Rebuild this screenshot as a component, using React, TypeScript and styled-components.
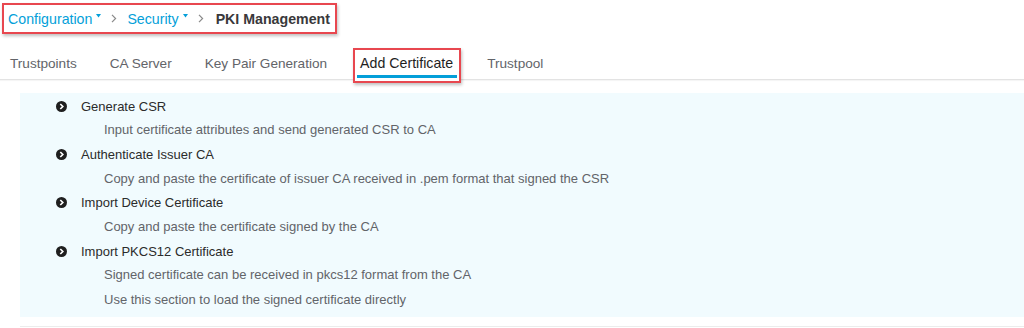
import React from "react";
import styled, { createGlobalStyle } from "styled-components";

const GlobalStyle = createGlobalStyle`
  html, body {
    margin: 0;
    padding: 0;
    background: #ffffff;
    font-family: "Liberation Sans", Arial, sans-serif;
  }
`;

const tabs = ["Trustpoints", "CA Server", "Key Pair Generation", "Add Certificate", "Trustpool"];

const items = [
  { title: "Generate CSR", lines: ["Input certificate attributes and send generated CSR to CA"] },
  {
    title: "Authenticate Issuer CA",
    lines: ["Copy and paste the certificate of issuer CA received in .pem format that signed the CSR"],
  },
  { title: "Import Device Certificate", lines: ["Copy and paste the certificate signed by the CA"] },
  {
    title: "Import PKCS12 Certificate",
    lines: [
      "Signed certificate can be received in pkcs12 format from the CA",
      "Use this section to load the signed certificate directly",
    ],
  },
];

const Caret = () => (
  <svg width="5" height="4" viewBox="0 0 5 4">
    <path d="M0 0h5L2.5 3.5z" fill="#049fd9" />
  </svg>
);

const Chevron = () => (
  <svg width="6" height="9" viewBox="0 0 6 9">
    <path d="M1 0.8l3.6 3.7L1 8.2" fill="none" stroke="#8a8a8a" strokeWidth="1.2" />
  </svg>
);

const Bullet = () => (
  <svg width="11" height="11" viewBox="0 0 11 11">
    <circle cx="5.5" cy="5.5" r="5.5" fill="#1f1f1f" />
    <path d="M4.3 3l2.5 2.5-2.5 2.5" fill="none" stroke="#ffffff" strokeWidth="1.7" />
  </svg>
);

const App = () => {
  return (
    <S.Page>
      <GlobalStyle />
      <S.Breadcrumb>
        <S.Crumb>
          Configuration <Caret />
        </S.Crumb>
        <Chevron />
        <S.Crumb>
          Security <Caret />
        </S.Crumb>
        <Chevron />
        <S.Current>PKI Management</S.Current>
      </S.Breadcrumb>

      <S.TabBar>
        {tabs.map((t) => (
          <S.Tab key={t} $active={t === "Add Certificate"}>
            {t}
          </S.Tab>
        ))}
      </S.TabBar>

      <S.Panel>
        {items.map((it) => (
          <S.Item key={it.title}>
            <S.ItemTitle>
              <Bullet />
              <span>{it.title}</span>
            </S.ItemTitle>
            {it.lines.map((l) => (
              <S.Desc key={l}>{l}</S.Desc>
            ))}
          </S.Item>
        ))}
      </S.Panel>
      <S.BottomRule />
    </S.Page>
  );
};

export default App;

interface tabProps {
  $active: boolean;
}

const S = {
  Page: styled.div`
    width: 1024px;
    height: 328px;
    overflow: hidden;
    padding-top: 3px;
    box-sizing: border-box;
  `,
  Breadcrumb: styled.div`
    display: inline-flex;
    align-items: center;
    gap: 10px;
    margin-left: 2px;
    height: 31px;
    padding: 0 5px 0 4px;
    box-sizing: border-box;
    border: 2px solid #e8474f;
    box-shadow: 1px 2px 3px rgba(0, 0, 0, 0.25);
    font-size: 14.2px;
  `,
  Crumb: styled.span`
    display: inline-flex;
    align-items: center;
    gap: 4px;
    color: #049fd9;
    svg {
      margin-top: -6px;
    }
  `,
  Current: styled.span`
    margin-left: 2px;
    color: #39393b;
    font-weight: bold;
  `,
  TabBar: styled.div`
    display: flex;
    align-items: flex-end;
    margin-top: 13px;
    padding-left: 10px;
    height: 32px;
    border-bottom: 1px solid #e3e3e3;
    box-shadow: 0 1px 1px rgba(0, 0, 0, 0.04);
  `,
  Tab: styled.div<tabProps>`
    position: relative;
    font-size: ${({ $active }) => ($active ? "14.2px" : "13.6px")};
    color: ${({ $active }) => ($active ? "#1e1e1e" : "#626469")};
    box-sizing: border-box;
    ${({ $active }) =>
      $active
        ? `
      border: 2px solid #e8474f;
      padding: 5px 6px 0 5px;
      height: 35px;
      margin: 0 26px -4px -7px;
      box-shadow: 1px 2px 3px rgba(0,0,0,0.25);
      background: #fff;
      &::after {
        content: "";
        position: absolute;
        left: 2px;
        right: 2px;
        bottom: 3px;
        height: 3px;
        background: #049fd9;
      }
    `
        : `
      padding-bottom: 8px;
      margin-right: 33px;
    `}
  `,
  Panel: styled.div`
    margin: 13px 0 0 20px;
    height: 224px;
    box-sizing: border-box;
    background: #f1fbfe;
    padding: 1px 0 0 36px;
    display: flex;
    flex-direction: column;
  `,
  Item: styled.div`
    display: flex;
    flex-direction: column;
  `,
  ItemTitle: styled.div`
    display: flex;
    align-items: center;
    gap: 14px;
    height: 24.2px;
    font-size: 13px;
    color: #2b2b2b;
  `,
  Desc: styled.div`
    height: 24.2px;
    line-height: 24px;
    padding-left: 48px;
    font-size: 13px;
    color: #626469;
  `,
  BottomRule: styled.div`
    margin: 9px 0 0 20px;
    border-top: 1px solid #ececec;
  `,
};
